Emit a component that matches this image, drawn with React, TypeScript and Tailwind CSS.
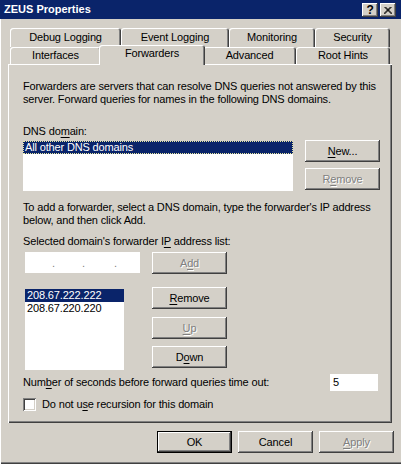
import type { ReactNode } from 'react';
import clsx from 'clsx';

// classic 3D edges
const raised =
  'shadow-[inset_-1px_-1px_#404040,inset_1px_1px_#ffffff,inset_-2px_-2px_#808080,inset_2px_2px_#d4d0c8]';
const sunken =
  'shadow-[inset_1px_1px_#808080,inset_-1px_-1px_#ffffff,inset_2px_2px_#404040,inset_-2px_-2px_#d4d0c8]';
const grayed = 'text-[#808080] [text-shadow:1px_1px_0_#ffffff]';

const topTabs = [
  { label: 'Debug Logging', w: 'w-[111px]' },
  { label: 'Event Logging', w: 'w-[108px]' },
  { label: 'Monitoring', w: 'w-[86px]' },
  { label: 'Security', w: 'w-[75px]' },
];

const bottomTabs = [
  { label: 'Interfaces', w: 'w-[91px]' },
  { label: 'Forwarders', w: 'w-[106px]', active: true },
  { label: 'Advanced', w: 'w-[93px]' },
  { label: 'Root Hints', w: 'w-[94px]' },
];

function Key({ children }: { children: ReactNode }) {
  return <span className="underline underline-offset-[2px]">{children}</span>;
}

function Button({
  children,
  disabled,
  className,
}: {
  children: ReactNode;
  disabled?: boolean;
  className?: string;
}) {
  return (
    <div
      className={clsx(
        'flex h-[22px] w-[75px] items-center justify-center bg-[#d4d0c8]',
        raised,
        disabled && grayed,
        className,
      )}
    >
      {children}
    </div>
  );
}

function Tab({ label, w, active }: { label: string; w: string; active?: boolean }) {
  return (
    <div
      className={clsx(
        'flex items-center justify-center rounded-t-[3px] bg-[#d4d0c8] shadow-[inset_1px_1px_#ffffff,inset_-1px_0_#404040,inset_-2px_0_#808080]',
        w,
        active ? 'relative z-10 -mx-[2px] -mt-[2px] h-[20px] pb-[3px]' : 'h-full',
      )}
    >
      {label}
    </div>
  );
}

export default function App() {
  return (
    <div className="flex h-[464px] w-[401px] flex-col overflow-hidden whitespace-nowrap bg-[#d4d0c8] font-['Liberation_Sans',Arial,sans-serif] text-[11px] leading-[13px] tracking-[-0.15px] text-black shadow-[inset_1px_0_#ffffff,inset_0_-1px_#404040,inset_0_-2px_#808080]">
      {/* Title bar */}
      <div className="flex h-[19px] items-center justify-between bg-[#0a246a] pl-[4px] pr-[5px]">
        <span className="font-bold tracking-normal text-white">ZEUS Properties</span>
        <div className="flex gap-[2px] pt-[1px]">
          <div className={clsx('flex h-[14px] w-[16px] items-center justify-center bg-[#d4d0c8] text-[12px] font-bold', raised)}>
            ?
          </div>
          <div className={clsx('flex h-[14px] w-[16px] items-center justify-center bg-[#d4d0c8]', raised)}>
            <svg width="8" height="7" viewBox="0 0 8 7">
              <path d="M0.5 0 L7.5 7 M1.5 0 L8.5 7 M7.5 0 L0.5 7 M6.5 0 L-0.5 7" stroke="#000" strokeWidth="1" />
            </svg>
          </div>
        </div>
      </div>

      {/* Tabs */}
      <div className="mt-[9px] flex h-[19px] pl-[10px]">
        {topTabs.map((t) => (
          <Tab key={t.label} {...t} />
        ))}
      </div>
      <div className="flex h-[17px] items-start pl-[10px]">
        {bottomTabs.map((t) => (
          <Tab key={t.label} {...t} />
        ))}
      </div>

      {/* Panel */}
      <div className="ml-[8px] flex h-[359px] w-[384px] flex-col pl-[15px] pr-[12px] pt-[16px] shadow-[inset_1px_1px_#ffffff,inset_-1px_-1px_#404040,inset_-2px_-2px_#808080]">
        <p>
          Forwarders are servers that can resolve DNS queries not answered by this
          <br />
          server. Forward queries for names in the following DNS domains.
        </p>

        <div className="mt-[19px]">
          DNS do<Key>m</Key>ain:
        </div>
        <div className="mt-[2px] flex justify-between">
          <div className="mt-[1px] h-[50px] w-[270px] bg-white">
            <div className="h-[13px] bg-[#0a246a] pl-[2px] text-white outline-1 -outline-offset-1 outline-dotted outline-[#e8e8a0]">
              All other DNS domains
            </div>
          </div>
          <div className="flex flex-col gap-[6px]">
            <Button>
              <Key>N</Key>ew...
            </Button>
            <Button disabled>
              R<span className="underline underline-offset-[2px]">e</span>move
            </Button>
          </div>
        </div>

        <p className="mt-[10px]">
          To add a forwarder, select a DNS domain, type the forwarder&apos;s IP address
          <br />
          below, and then click Add.
        </p>
        <div className="mt-[8px]">
          Selected domain&apos;s forwarder I<Key>P</Key> address list:
        </div>

        <div className="mt-[4px] flex items-start">
          <div className="ml-[2px] flex h-[21px] w-[115px] items-end bg-white pb-[3px] pl-[27px] text-[#808080]">
            <span className="w-[3px]">.</span>
            <span className="ml-[27px] w-[3px]">.</span>
            <span className="ml-[29px] w-[3px]">.</span>
          </div>
          <Button disabled className="ml-[12px] h-[21px]">
            A<span className="underline underline-offset-[2px]">d</span>d
          </Button>
        </div>

        <div className="mt-[13px] flex items-start">
          <div className="ml-[2px] mt-[2px] h-[81px] w-[99px] bg-white">
            <div className="h-[13px] bg-[#0a246a] pl-[2px] text-white">208.67.222.222</div>
            <div className="h-[13px] pl-[2px]">208.67.220.220</div>
          </div>
          <div className="ml-[28px] flex flex-col">
            <Button>
              <Key>R</Key>emove
            </Button>
            <Button disabled className="mt-[8px]">
              <span className="underline underline-offset-[2px]">U</span>p
            </Button>
            <Button className="mt-[7px]">
              D<Key>o</Key>wn
            </Button>
          </div>
        </div>

        <div className="mt-[4px] flex items-center justify-between">
          <span>
            Num<Key>b</Key>er of seconds before forward queries time out:
          </span>
          <div className="mr-[2px] flex h-[17px] w-[48px] items-center bg-white pl-[3px]">5</div>
        </div>

        <div className="mt-[7px] flex items-center gap-[6px]">
          <div className={clsx('h-[13px] w-[13px] bg-white', sunken)} />
          <span>
            Do not u<Key>s</Key>e recursion for this domain
          </span>
        </div>
      </div>

      {/* Dialog buttons */}
      <div className="mt-[8px] flex justify-end gap-[6px] pr-[7px]">
        <Button className="shadow-[inset_0_0_0_1px_#000000,inset_-2px_-2px_#404040,inset_2px_2px_#ffffff,inset_-3px_-3px_#808080]">
          OK
        </Button>
        <Button>Cancel</Button>
        <Button disabled>
          <span className="underline underline-offset-[2px]">A</span>pply
        </Button>
      </div>
    </div>
  );
}
